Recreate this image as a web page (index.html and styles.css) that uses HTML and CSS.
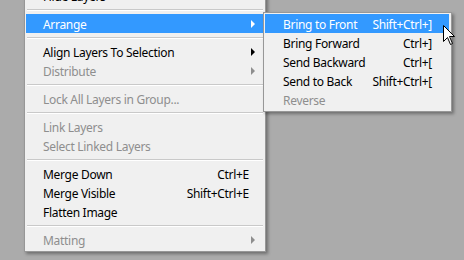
FILE: index.html
```html
<!DOCTYPE html>
<html lang="en">
<head>
  <meta charset="UTF-8" />
  <title>Layer Menu</title>
  <link rel="stylesheet" href="styles.css">
</head>
<body>
  <div class="menu main">
    <div class="item">Hide Layers</div>
    <div class="sep"></div>
    <div class="item active">Arrange<span class="arrow"></span></div>
    <div class="sep"></div>
    <div class="item">Align Layers To Selection<span class="arrow"></span></div>
    <div class="item off">Distribute<span class="arrow"></span></div>
    <div class="sep"></div>
    <div class="item off">Lock All Layers in Group...</div>
    <div class="sep"></div>
    <div class="item off">Link Layers</div>
    <div class="item off">Select Linked Layers</div>
    <div class="sep"></div>
    <div class="item">Merge Down<span class="key">Ctrl+E</span></div>
    <div class="item">Merge Visible<span class="key">Shift+Ctrl+E</span></div>
    <div class="item">Flatten Image</div>
    <div class="sep"></div>
    <div class="item off">Matting<span class="arrow"></span></div>
  </div>

  <div class="menu sub">
    <div class="item active">Bring to Front<span class="key">Shift+Ctrl+]</span></div>
    <div class="item">Bring Forward<span class="key">Ctrl+]</span></div>
    <div class="item">Send Backward<span class="key">Ctrl+[</span></div>
    <div class="item">Send to Back<span class="key">Shift+Ctrl+[</span></div>
    <div class="item off">Reverse</div>
  </div>

  <svg class="cursor" width="13" height="21" viewBox="0 0 13 21">
    <path d="M0.5 0.5 L0.5 16.5 L4.5 12.5 L7.5 19.5 L9.5 18.5 L6.5 11.5 L11.5 11.5 Z" fill="#fff" stroke="#000" stroke-width="1"/>
  </svg>
</body>
</html>
```

FILE: styles.css
```css
body { margin: 0; background: #ababab; font-family: "Noto Sans", "Liberation Sans", sans-serif; font-size: 12px; letter-spacing: -0.3px; color: #000; overflow: hidden; height: 260px; position: relative; }
.menu { background: #f0f0f0; border: 1px solid #979797; box-sizing: border-box; box-shadow: 2px 2px 3px rgba(0,0,0,0.35); }
.main { width: 242px; margin: -17px 0 0 24px; padding: 2px 2px 2px 1px; }
.sub { position: absolute; left: 263px; top: 12px; width: 189px; padding: 1px 2px 2px 1px; }
.item { display: flex; align-items: center; height: 19px; padding: 1px 6px 0 17px; box-sizing: border-box; white-space: nowrap; }
.sub .item { padding: 1px 17px 0 18px; }
.item.active { background: #3399ff; color: #fff; }
.item.off { color: #8e8e8e; }
.key { margin-left: auto; }
.main .key { margin-right: 8px; }
.arrow { margin-left: auto; margin-right: 2px; width: 0; height: 0; border-top: 4px solid transparent; border-bottom: 4px solid transparent; border-left: 4px solid #000; }
.item.off .arrow { border-left-color: #8e8e8e; }
.item.active .arrow { border-left-color: #fff; }
.sep { height: 0; margin: 4px 0 3px 1px; border-top: 1px solid #c9c9c9; border-bottom: 1px solid #fff; }
.cursor { position: absolute; left: 443px; top: 25px; }
```
